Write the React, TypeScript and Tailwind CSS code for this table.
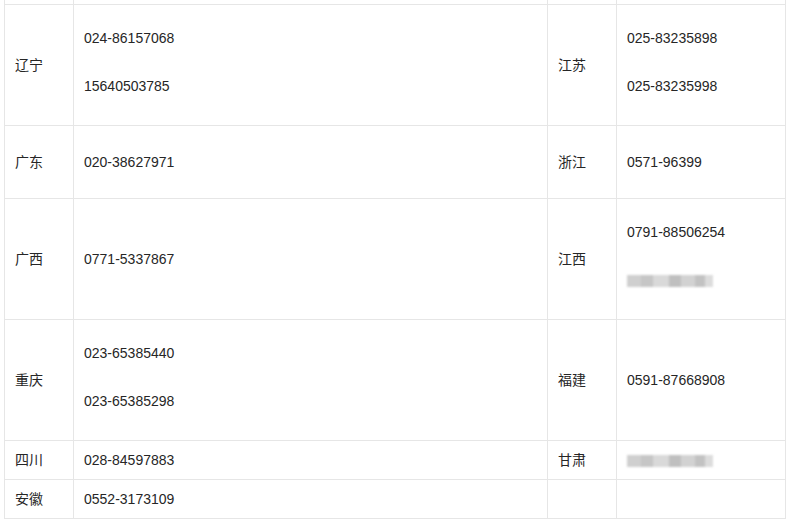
type Cell = { name?: string; phones?: (string | null)[]; wrap?: boolean };

interface Row {
  left: Cell;
  right: Cell;
}

const rows: Row[] = [
  { left: { name: '辽宁', phones: ['024-86157068', '15640503785'], wrap: true }, right: { name: '江苏', phones: ['025-83235898', '025-83235998'], wrap: true } },
  { left: { name: '广东', phones: ['020-38627971'], wrap: true }, right: { name: '浙江', phones: ['0571-96399'], wrap: true } },
  { left: { name: '广西', phones: ['0771-5337867'], wrap: true }, right: { name: '江西', phones: ['0791-88506254', null], wrap: true } },
  { left: { name: '重庆', phones: ['023-65385440', '023-65385298'], wrap: true }, right: { name: '福建', phones: ['0591-87668908'], wrap: true } },
  { left: { name: '四川', phones: ['028-84597883'] }, right: { name: '甘肃', phones: [null] } },
  { left: { name: '安徽', phones: ['0552-3173109'] }, right: {} },
];

function Blurred() {
  return (
    <span className="inline-flex h-[12px] w-[86px] align-middle blur-[1.2px] opacity-80">
      <span className="h-full w-[14px] bg-[#c4c4c4]" />
      <span className="h-full w-[12px] bg-[#b8b8b8]" />
      <span className="h-full w-[16px] bg-[#d0d0d0]" />
      <span className="h-full w-[12px] bg-[#b0b0b0]" />
      <span className="h-full w-[14px] bg-[#c8c8c8]" />
      <span className="h-full w-[10px] bg-[#b4b4b4]" />
      <span className="h-full w-[8px] bg-[#d4d4d4]" />
    </span>
  );
}

function Phones({ cell }: { cell: Cell }) {
  if (!cell.phones) return null;
  const lines = cell.phones.map((p, i) => (
    <span key={i}>
      {i > 0 && (
        <>
          <br />
          <br />
        </>
      )}
      {p === null ? <Blurred /> : p}
    </span>
  ));
  if (!cell.wrap) return <>{lines}</>;
  // multi-line cells sit a little higher than single ones in the original
  const margin = cell.phones.length > 1 ? 'mt-[14px] mb-[20px]' : 'my-[17px]';
  return <p className={margin}>{lines}</p>;
}

const td = 'border border-[#e6e6e6] px-[10px] py-[7px] align-middle';

export default function App() {
  return (
    <div className="h-[525px] w-[800px] overflow-hidden bg-white">
      <table
        className="ml-[4px] -mt-[30px] w-[781px] table-fixed border-collapse text-[14px] leading-[24px] text-[#262626]"
        style={{ fontFamily: '"Liberation Sans", Arial, "Noto Sans CJK SC", sans-serif' }}
      >
        <colgroup>
          <col className="w-[69px]" />
          <col className="w-[474px]" />
          <col className="w-[69px]" />
          <col className="w-[169px]" />
        </colgroup>
        <tbody>
          <tr className="h-[34px]">
            <td className={td} />
            <td className={td} />
            <td className={td} />
            <td className={td} />
          </tr>
          {rows.map((row, i) => (
            <tr key={i}>
              <td className={td}>{row.left.name}</td>
              <td className={td}>
                <Phones cell={row.left} />
              </td>
              <td className={td}>{row.right.name}</td>
              <td className={td}>
                <Phones cell={row.right} />
              </td>
            </tr>
          ))}
        </tbody>
      </table>
    </div>
  );
}
